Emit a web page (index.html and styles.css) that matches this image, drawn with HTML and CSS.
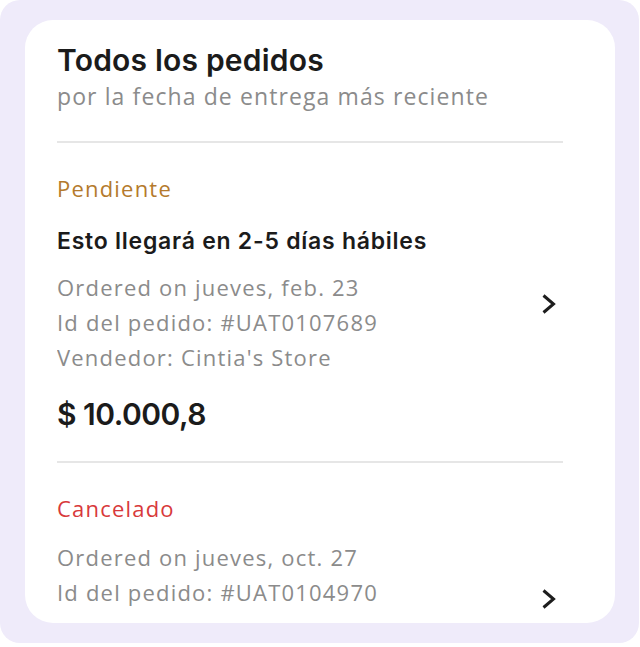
FILE: index.html
```html
<!DOCTYPE html>
<html lang="es">
<head>
<meta charset="utf-8">
<title>Todos los pedidos</title>
<link rel="stylesheet" href="styles.css">
</head>
<body>
<div class="frame">
  <section class="card">
    <header class="head">
      <h1 class="title">Todos los pedidos</h1>
      <p class="subtitle">por la fecha de entrega más reciente</p>
    </header>
    <div class="list">
      <div class="order">
        <div class="order-body">
          <p class="status status-pending">Pendiente</p>
          <p class="eta">Esto llegará en 2-5 días hábiles</p>
          <p class="info">Ordered on jueves, feb. 23</p>
          <p class="info">Id del pedido: #UAT0107689</p>
          <p class="info">Vendedor: Cintia's Store</p>
          <p class="price">$ 10.000,8</p>
        </div>
        <svg class="chev" viewBox="0 0 16 22" width="16" height="22" aria-hidden="true"><polyline points="2.5,2.5 12.5,11 2.5,19.5" fill="none" stroke="#1d1d1d" stroke-width="3"/></svg>
      </div>
      <div class="order">
        <div class="order-body">
          <p class="status status-cancel">Cancelado</p>
          <p class="info">Ordered on jueves, oct. 27</p>
          <p class="info">Id del pedido: #UAT0104970</p>
          <p class="info">Vendedor: Cintia's Store</p>
          <p class="price">$ 8.500,0</p>
        </div>
        <svg class="chev" viewBox="0 0 16 22" width="16" height="22" aria-hidden="true"><polyline points="2.5,2.5 12.5,11 2.5,19.5" fill="none" stroke="#1d1d1d" stroke-width="3"/></svg>
      </div>
    </div>
  </section>
</div>
</body>
</html>
```
FILE: styles.css
```css
html, body {
  margin: 0;
  padding: 0;
  background: #ffffff;
}
body {
  font-family: "Open Sans", "Noto Sans", sans-serif;
}
p, h1 {
  margin: 0;
}
.frame {
  width: 639px;
  height: 643px;
  box-sizing: border-box;
  background: #efebfa;
  border-radius: 20px;
  padding: 20px 24px 20px 25px;
}
.card {
  height: 603px;
  box-sizing: border-box;
  background: #ffffff;
  border-radius: 28px;
  overflow: hidden;
  padding: 0 52px 4px 32px;
  display: flex;
  flex-direction: column;
}
.head {
  flex: none;
  padding-top: 22px;
  padding-bottom: 30px;
  border-bottom: 2px solid #e6e6e6;
}
.list {
  flex: 1;
  min-height: 0;
  overflow: hidden;
}
.title {
  font-family: "Inter", sans-serif;
  font-weight: 600;
  font-size: 30px;
  line-height: 36px;
  color: #1b1b1b;
  letter-spacing: 0.2px;
}
.subtitle {
  margin-top: 3px;
  font-size: 23px;
  line-height: 30px;
  color: #8b8b8b;
  letter-spacing: 1.1px;
}
.order {
  display: flex;
  align-items: center;
  justify-content: space-between;
  padding: 30px 0 27px;
  border-bottom: 2px solid #e6e6e6;
}
.chev {
  flex: none;
  margin-right: 6px;
}
.status {
  font-size: 22px;
  line-height: 30px;
  margin-bottom: 17px;
  letter-spacing: 1.2px;
}
.status-pending { color: #b47a2c; }
.status-cancel { color: #d8393b; }
.eta {
  font-family: "Inter", sans-serif;
  font-weight: 600;
  font-size: 23px;
  line-height: 30px;
  color: #1b1b1b;
  padding-top: 6px;
  margin-bottom: 14px;
  letter-spacing: 0.75px;
}
.info {
  font-size: 22px;
  line-height: 35px;
  color: #8b8b8b;
  letter-spacing: 1.2px;
}
.price {
  font-family: "Inter", sans-serif;
  font-weight: 600;
  font-size: 30px;
  line-height: 40px;
  color: #1b1b1b;
  margin-top: 19px;
  letter-spacing: -0.5px;
}
```
